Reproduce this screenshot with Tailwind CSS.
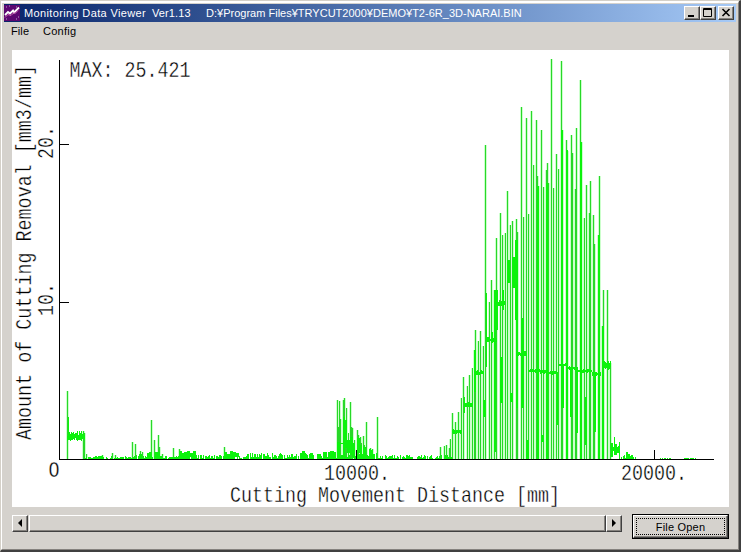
<!DOCTYPE html>
<html lang="en">
<head>
<meta charset="utf-8">
<title>Monitoring Data Viewer</title>
<script src="https://cdn.jsdelivr.net/npm/@tailwindcss/browser@4"></script>
</head>
<body class="w-[741px] h-[552px] overflow-hidden bg-[#d4d0c8] font-['Liberation_Sans',sans-serif] text-black">
<main class="w-[741px] h-[552px] bg-[#d5d2cd] border-t border-l border-t-[#d4d0c8] border-l-[#d4d0c8] border-r-2 border-b-2 border-r-[#404040] border-b-[#404040]">
<div class="w-full h-full border-t-2 border-l border-white border-r border-b border-r-[#85827e] border-b-[#85827e] pl-[2px] pr-[2px] pt-px flex flex-col">
  <header class="h-[18px] shrink-0 flex items-center bg-linear-to-r from-[#0a246a] to-[#a6caf7] pr-[2px] text-white text-[11px] leading-[18px] whitespace-pre">
    <svg class="w-4 h-4 mr-1 shrink-0" viewBox="0 0 16 16"><rect width="16" height="16" fill="#5c0870"/><path d="M2 2h1M5 1h1M12 2h1M2 14h1M12 14h1M14 12h1" stroke="#b79bc8"/><path d="M1 10l3-3 2 1.500 3-3 1 2 5-5" stroke="#fff" stroke-width="1.8" fill="none"/><path d="M1 12.500l3-3 3 1 3-3 1 1 3-3" stroke="#d060b0" fill="none"/></svg>
    <span class="w-[128px] shrink-0 tracking-[0.36px]">Monitoring Data Viewer</span>
    <span class="w-[54px] shrink-0 tracking-[0.1px]">Ver1.13</span>
    <span class="grow tracking-[0.01px]">D:¥Program Files¥TRYCUT2000¥DEMO¥T2-6R_3D-NARAI.BIN</span>
    <div class="flex shrink-0">
      <div class="w-4 h-[14px] bg-[#d5d2cd] border border-t-white border-l-white border-r-[#404040] border-b-[#404040] shadow-[inset_-1px_-1px_#85827e]"><svg class="block w-[14px] h-3" viewBox="0 0 14 12"><path d="M3 9h6" stroke="#000" stroke-width="2"/></svg></div>
      <div class="w-4 h-[14px] bg-[#d5d2cd] border border-t-white border-l-white border-r-[#404040] border-b-[#404040] shadow-[inset_-1px_-1px_#85827e]"><svg class="block w-[14px] h-3" viewBox="0 0 14 12"><path d="M2.5 1.5h8v8h-8zM2 2.5h9" stroke="#000" fill="none"/></svg></div>
      <div class="ml-[2px] w-4 h-[14px] bg-[#d5d2cd] border border-t-white border-l-white border-r-[#404040] border-b-[#404040] shadow-[inset_-1px_-1px_#85827e]"><svg class="block w-[14px] h-3" viewBox="0 0 14 12"><path d="M3.5 2l7 7M10.500 2l-7 7" stroke="#000" stroke-width="1.6"/></svg></div>
    </div>
  </header>
  <nav class="h-[28px] shrink-0 flex items-start gap-[14px] pl-[7px] pt-px text-[11px] leading-[16px]">
    <span class="w-[18px] tracking-[0.1px]">File</span><span class="tracking-[0.25px]">Config</span>
  </nav>
  <section class="ml-2 w-[717px] h-[457px] shrink-0 bg-white">
    <svg class="block w-[717px] h-[457px]" viewBox="12 50 717 457" font-family="'Liberation Mono', monospace" font-size="21.500" fill="#000">
      <g id="plot" fill="none"></g>
      <path d="M59.5 60V459.500H714M59 144.500H69M59 302.500H69M356.500 450V459M654.500 450V459" stroke="#000" fill="none" shape-rendering="crispEdges"/>
      <g stroke="#fff" stroke-width=".35">
      <text x="69.500" y="77" textLength="121" lengthAdjust="spacingAndGlyphs">MAX: 25.421</text>
      <text x="48.500" y="477" textLength="11" lengthAdjust="spacingAndGlyphs">O</text>
      <text x="324" y="479.500" textLength="66" lengthAdjust="spacingAndGlyphs">10000.</text>
      <text x="621" y="479.500" textLength="66" lengthAdjust="spacingAndGlyphs">20000.</text>
      <text x="230" y="502" textLength="330" lengthAdjust="spacingAndGlyphs">Cutting Movement Distance [mm]</text>
      <text transform="translate(31 440) rotate(-90)" textLength="375" lengthAdjust="spacingAndGlyphs">Amount of Cutting Removal [mm3/mm]</text>
      <text transform="translate(53 159) rotate(-90)" textLength="33" lengthAdjust="spacingAndGlyphs">20.</text>
      <text transform="translate(53 316) rotate(-90)" textLength="33" lengthAdjust="spacingAndGlyphs">10.</text>
      </g>
    </svg>
  </section>
  <footer class="flex pl-2 pt-[7px]">
    <div class="flex mt-px w-[610px] h-[17px]">
      <div class="w-4 h-[17px] border border-t-white border-l-white border-r-[#404040] border-b-[#404040] shadow-[inset_-1px_-1px_#85827e]"><svg class="block w-[14px] h-[15px]" viewBox="0 0 14 15"><path d="M9 3v8L5 7z"/></svg></div>
      <div class="ml-px grow h-[17px] border border-t-white border-l-white border-r-[#404040] border-b-[#404040] shadow-[inset_-1px_-1px_#85827e]"></div>
      <div class="w-4 h-[17px] border border-t-white border-l-white border-r-[#404040] border-b-[#404040] shadow-[inset_-1px_-1px_#85827e]"><svg class="block w-[14px] h-[15px]" viewBox="0 0 14 15"><path d="M5 3v8l4-4z"/></svg></div>
    </div>
    <button class="ml-[10px] w-[97px] h-[25px] border border-black p-0 text-[11px]"><span class="block w-full h-full border border-t-white border-l-white border-r-[#404040] border-b-[#404040] shadow-[inset_-1px_-1px_#85827e] p-[2px]"><span class="block h-full border border-dotted border-black leading-[16px] tracking-[0.2px]">File Open</span></span></button>
  </footer>
</div>
</main>
<script>
// Each group: origin in pixels, then samples in thirds of a pixel.
// bars: [x, top] down to the axis; blocks: [x, top, bottom, width in px].
const groups = [
 {o:[50,380], bars:[[52,33],[103,158],[101,152],[110,222],[157,225],[187,218],[196,225],[247,187],[256,192],[271,213],[278,217],[304,120],[313,180],[325,165],[328,200],[337,222],[370,205],[388,208],[523,200]],
  blocks:[[55,110,180,1],[294,219,238,3],[301,217,238,3],[318,216,238,3],[325,216,238,3],[272,222,238,3],[390,213,236,3],[398,219,232,3],[407,217,234,3],[416,214,233,3],[424,220,232,3],[433,214,236,3],[526,216,232,3],[534,222,234,3],[543,214,234,3],[552,216,232,3],[562,220,232,3]]},
 {o:[300,380], bars:[[112,60],[115,140],[118,63],[121,118],[130,60],[134,55],[137,120],[139,85],[145,160],[151,67],[154,142],[157,145],[163,180],[172,150],[175,165],[181,170],[184,190],[190,167],[194,196],[199,127],[210,205],[217,208],[232,110],[421,200],[433,198],[439,195],[448,205],[451,178]],
  blocks:[[9,212,236,3],[16,218,234,2],[34,220,234,3],[57,221,236,3],[75,217,236,4],[88,216,236,3],[97,213,236,4],[105,215,236,2],[116,185,238,3],[125,188,192,3],[132,110,232,2],[138,120,205,2],[146,180,220,3],[153,170,226,3],[160,190,234,3],[175,175,220,3],[183,196,236,2],[193,200,236,3],[210,208,234,2],[217,210,236,2]]},
 {o:[430,130], bars:[[67,850],[76,877],[85,847],[94,803],[100,740],[112,768],[118,735],[127,715],[133,660],[136,600],[145,633],[151,603],[160,648],[166,45],[178,515],[184,450],[193,480],[199,323],[211,250],[217,315],[226,310],[232,183],[241,285],[247,272],[259,267],[262,305],[274,-70],[280,262],[289,-23],[295,253]],
  blocks:[[169,490,712,1],[103,800,850,1],[134,660,785,2],[163,810,862,3],[196,480,965,2],[201,480,600,2],[213,680,820,3],[220,480,540,2],[244,790,815,3],[236,390,460,3],[250,380,445,3],[254,400,475,3],[259,330,570,3],[262,570,835,2],[278,565,830,2],[292,930,988,3],[187,605,640,2]]},
 {o:[510,50], bars:[[49,205],[55,492],[64,183],[70,345],[79,210],[82,378],[85,408],[94,240],[100,410],[110,360],[112,340],[115,400],[124,27],[130,415],[139,312],[145,357],[154,33],[157,240]],
  blocks:[[10,620,715,3],[14,640,710,2],[22,820,1075,2],[37,807,1075,3],[52,1170,1228,3],[83,408,1228,2],[97,1155,1175,3],[112,400,1228,2],[142,970,1125,2],[157,240,1075,2]]},
 {o:[560,50], bars:[[19,270],[22,303],[34,255],[37,310],[46,417],[49,235],[61,90],[64,275],[73,503],[79,405],[88,488],[92,393],[100,495],[103,583],[115,555],[118,378],[127,828],[130,720],[142,720],[151,940]],
  blocks:[[9,950,1075,2],[20,300,1228,2],[33,950,1100,2],[50,950,1150,2],[63,275,1228,2],[77,1040,1185,2],[104,970,1145,2],[117,555,1228,2],[128,828,1228,2],[157,1180,1222,2],[163,1160,1215,1],[167,1182,1215,2],[173,1190,1210,2],[179,1175,1226,1],[192,1215,1228,1],[202,1207,1228,2],[208,1212,1226,2],[216,1216,1226,2],[225,1220,1228,1]]}
];
let halo='', thin='', thick='';
for (const g of groups) {
  const [ox,oy]=g.o;
  for (const [x,t] of g.bars) {
    const X=Math.floor(ox+x/3)+.5, Y=Math.round(oy+t/3);
    thin+=`M${X} ${Y}V459`; halo+=`M${X} ${Y}V459`;
  }
  for (const [x,t,b,w] of g.blocks) {
    const X=Math.round(ox+x/3-w/2), Y=Math.round(oy+t/3), B=Math.round(oy+b/3);
    thick+=`M${X} ${Y}h${w}V${B}h${-w}z`;
  }
}
// Fluctuation around steady levels: x from, x to, level, amplitude
let seed=7; const rnd=()=>(seed=(seed*16807)%2147483647)/2147483647;
for (const [a,b,y,h] of [[67,85,437,5],[452,462,432,2],[464,473,405,2],[474,484,373,2],[486,497,340,2],[497,505,303,3],[517,527,354,2],[528,540,371,1.2],[540,547,372,1.5],[547,558,373,1],[559,567,365,1.5],[567,575,368,1.5],[575,592,371,1],[592,601,374,1.5],[602,611,366,5],[611,620,450,5]])
  for (let x=a;x<b;x++){ const u=Math.round(y-1-rnd()*h), d=Math.round(y+1+rnd()*h*.7); thick+=`M${x} ${u}h1V${d}h-1z`; }
for (const [a,b,h] of [[85,132,2],[132,162,3],[162,178,2],[178,200,4],[200,224,3],[224,246,4],[246,300,5],[300,336,5],[336,380,5],[380,438,3],[438,452,4],[620,634,3],[660,672,.4],[684,696,.4]])
  for (let x=a;x<b;x++) if (rnd()<.82) { const t=Math.round(458-rnd()*h); thick+=`M${x} ${t}h1V459h-1z`; }
document.getElementById('plot').innerHTML=`<path d="${halo}" stroke="#ccffcc" stroke-width="3"/><path d="${thin}" stroke="#28d828" shape-rendering="crispEdges"/><path d="${thick}" fill="#0cf20c" shape-rendering="crispEdges"/>`;
</script>
</body>
</html>
